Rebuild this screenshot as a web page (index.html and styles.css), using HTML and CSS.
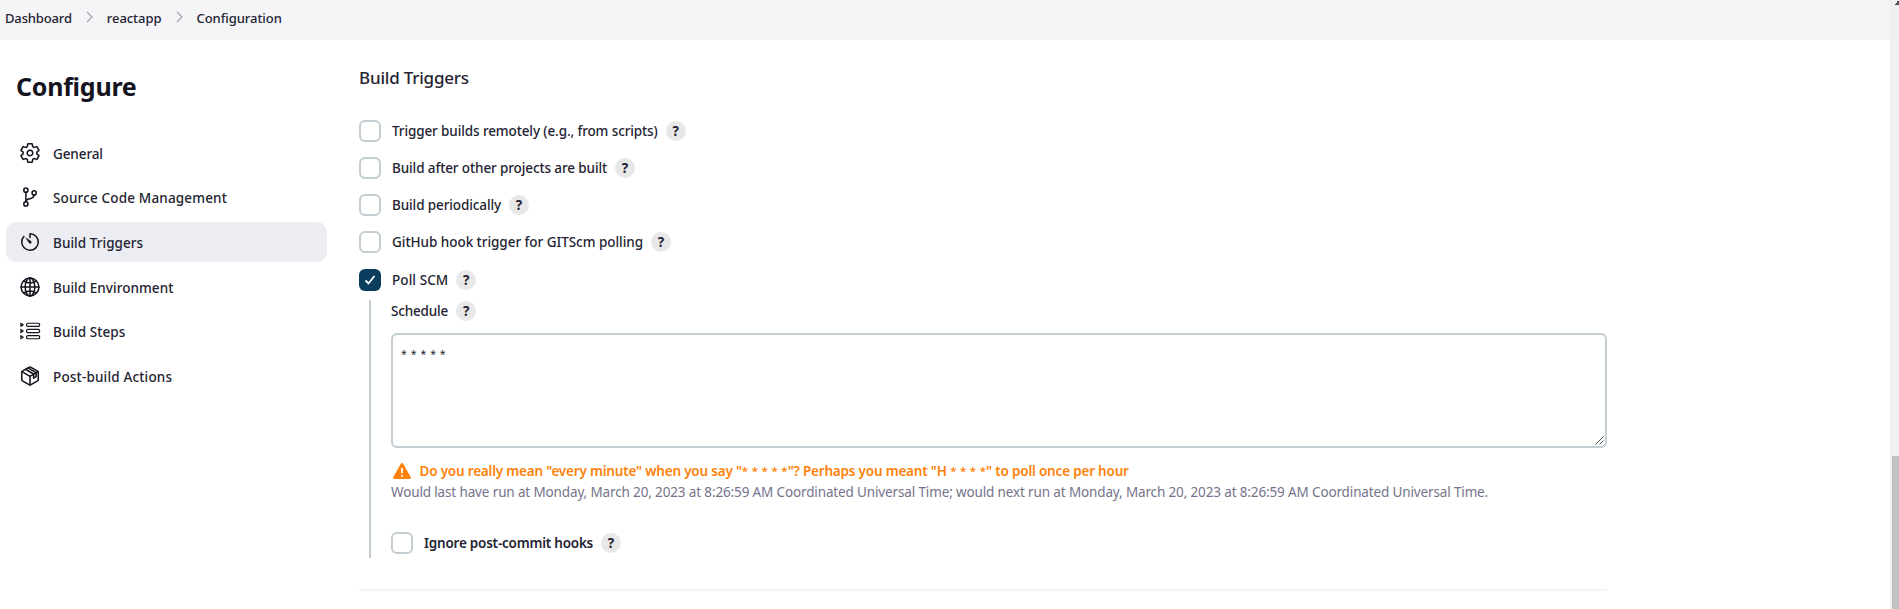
FILE: index.html
```
<!DOCTYPE html>
<html lang="en">
<head>
<meta charset="utf-8">
<title>Configuration - reactapp</title>
<link rel="stylesheet" href="styles.css">
</head>
<body>
<div class="page">
  <div class="content">
    <nav class="breadcrumbs">
      <a class="crumb crumb-tight">Dashboard</a>
      <svg class="chevron" viewBox="0 0 7 12"><path d="M1 1l5 5-5 5"/></svg>
      <a class="crumb">reactapp</a>
      <svg class="chevron" viewBox="0 0 7 12"><path d="M1 1l5 5-5 5"/></svg>
      <a class="crumb">Configuration</a>
    </nav>
    <div class="columns">
      <aside class="sidebar">
        <h1>Configure</h1>
        <ul class="tasks">
          <li class="task task-snug"><svg class="icon" viewBox="0 0 512 512"><path d="M262.29 192.31a64 64 0 1057.4 57.4 64.13 64.13 0 00-57.4-57.4zM416.39 256a154.34 154.34 0 01-1.53 20.79l45.21 35.46a10.81 10.81 0 012.45 13.75l-42.77 74a10.81 10.81 0 01-13.14 4.59l-44.9-18.08a16.11 16.11 0 00-15.17 1.75A164.48 164.48 0 01325 400.8a15.94 15.94 0 00-8.82 12.14l-6.73 47.89a11.08 11.08 0 01-10.68 9.17h-85.54a11.11 11.11 0 01-10.69-8.87l-6.72-47.82a16.07 16.07 0 00-9-12.22 155.3 155.3 0 01-21.46-12.57 16 16 0 00-15.11-1.71l-44.89 18.07a10.81 10.81 0 01-13.14-4.58l-42.77-74a10.8 10.8 0 012.45-13.75l38.21-30a16.05 16.05 0 006-14.08c-.36-4.17-.58-8.33-.58-12.5s.21-8.27.58-12.35a16 16 0 00-6.07-13.94l-38.19-30A10.81 10.81 0 0149.48 186l42.77-74a10.81 10.81 0 0113.14-4.59l44.9 18.08a16.11 16.11 0 0015.17-1.75A164.48 164.48 0 01187 111.2a15.94 15.94 0 008.82-12.14l6.73-47.89A11.08 11.08 0 01213.23 42h85.54a11.11 11.11 0 0110.69 8.87l6.72 47.82a16.07 16.07 0 009 12.22 155.3 155.3 0 0121.46 12.57 16 16 0 0015.11 1.71l44.89-18.07a10.81 10.81 0 0113.14 4.58l42.77 74a10.8 10.8 0 01-2.45 13.75l-38.21 30a16.05 16.05 0 00-6.05 14.08c.33 4.14.55 8.3.55 12.47z"/></svg><span>General</span></li>
          <li class="task task-wide"><svg class="icon" viewBox="0 0 512 512"><circle cx="160" cy="96" r="48"/><circle cx="160" cy="416" r="48"/><path d="M160 368V144"/><circle cx="352" cy="160" r="48"/><path d="M352 208c0 128-192 48-192 160"/></svg><span>Source Code Management</span></li>
          <li class="task active"><svg class="icon" viewBox="0 0 512 512"><path d="M112.91 128A191.85 191.85 0 0064 254c-1.18 106.35 85.65 193.8 192 194 106.2.2 192-85.83 192-192 0-104.54-83.55-189.61-187.5-192a4.36 4.36 0 00-4.5 4.37V152"/><path class="solid" d="M233.38 278.63l-79-113a8.13 8.13 0 0111.32-11.32l113 79a32.5 32.5 0 01-37.25 53.26 33.21 33.21 0 01-8.07-7.94z"/></svg><span>Build Triggers</span></li>
          <li class="task"><svg class="icon" viewBox="0 0 512 512"><path d="M256 48C141.13 48 48 141.13 48 256s93.13 208 208 208 208-93.13 208-208S370.87 48 256 48z"/><path d="M256 48c-58.07 0-112.67 93.13-112.67 208S197.93 464 256 464s112.67-93.13 112.67-208S314.07 48 256 48z"/><path d="M117.33 117.33c38.24 27.15 86.38 43.34 138.67 43.34s100.43-16.19 138.67-43.34M394.67 394.67c-38.24-27.15-86.38-43.34-138.67-43.34s-100.43 16.19-138.67 43.34M256 48v416M464 256H48"/></svg><span>Build Environment</span></li>
          <li class="task"><svg class="icon thin" viewBox="0 0 512 512"><rect x="176" y="76" width="304" height="72" rx="30"/><rect x="176" y="220" width="304" height="72" rx="30"/><rect x="176" y="364" width="304" height="72" rx="30"/><path d="M44 76v72l54-36zM44 220v72l54-36zM44 364v72l54-36z"/></svg><span>Build Steps</span></li>
          <li class="task task-loose"><svg class="icon" viewBox="0 0 512 512"><path d="M448 341.37V170.61A32 32 0 00432.11 143l-152-88.46a47.94 47.94 0 00-48.24 0L79.89 143A32 32 0 0064 170.61v170.76A32 32 0 0079.89 369l152 88.46a48 48 0 0048.24 0l152-88.46A32 32 0 00448 341.37z"/><path d="M69 153.99l187 110 187-110M256 463.99v-200M152 99l188 111v96l58-34v-94L212 66"/></svg><span>Post-build Actions</span></li>
        </ul>
      </aside>
      <main class="config">
        <h2>Build Triggers</h2>
        <div class="option opt-tight"><span class="box"></span><label>Trigger builds remotely (e.g., from scripts)</label><span class="help">?</span></div>
        <div class="option opt-tight"><span class="box"></span><label>Build after other projects are built</label><span class="help">?</span></div>
        <div class="option opt-tight"><span class="box"></span><label>Build periodically</label><span class="help">?</span></div>
        <div class="option"><span class="box"></span><label>GitHub hook trigger for GITScm polling</label><span class="help">?</span></div>
        <div class="option last"><span class="box checked"><svg viewBox="0 0 12 10"><path d="M1.5 5.5l3 3L10.5 1"/></svg></span><label>Poll SCM</label><span class="help">?</span></div>
        <section class="nested">
          <div class="field-label"><span>Schedule</span><span class="help">?</span></div>
          <div class="textarea">* * * * *<svg class="grip" viewBox="0 0 9 9"><path d="M.5 8.5l8-8M4.5 8.5l4-4"/></svg></div>
          <div class="warning"><svg viewBox="0 0 18 16"><path d="M7.8.8a1.4 1.4 0 012.4 0l7.5 13.1a1.4 1.4 0 01-1.2 2.1h-15a1.4 1.4 0 01-1.2-2.1z"/><path class="mark" d="M9 5v5.2M9 12v1.8"/></svg><span>Do you really mean "every minute" when you say "<span class="stars">* * * * *</span>"? Perhaps you meant "H <span class="stars">* * * *</span>" to poll once per hour</span></div>
          <div class="note">Would last have run at Monday, March 20, 2023 at 8:26:59 AM Coordinated Universal Time; would next run at Monday, March 20, 2023 at 8:26:59 AM Coordinated Universal Time.</div>
          <div class="option strong"><span class="box"></span><label>Ignore post-commit hooks</label><span class="help">?</span></div>
        </section>
      </main>
    </div>
  </div>
  <div class="scrollbar"><svg viewBox="0 0 5 5" shape-rendering="crispEdges"><path d="M0 5V4h1V3h1V2h1V1h2v4z"/></svg><div class="thumb"></div></div>
</div>
</body>
</html>
```
FILE: styles.css
```
* { box-sizing: border-box; }
body {
  margin: 0;
  background: #fff;
  color: #242331;
  font: 500 13.5px/20px "Noto Sans", "Open Sans", sans-serif;
  white-space: nowrap;
}
.page { display: flex; height: 609px; overflow: hidden; }
.content { flex: 1; min-width: 0; }

.breadcrumbs {
  display: flex;
  align-items: center;
  height: 40px;
  padding: 0 0 4px 5px;
  background: #f5f5f8;
  font-size: 13px;
  letter-spacing: -.05px;
}
.crumb-tight { letter-spacing: -.15px; }
.chevron {
  width: 7px;
  height: 12px;
  margin: 0 13.5px 2px 14.5px;
  fill: none;
  stroke: #a5a4b8;
  stroke-width: 1.3;
}

.columns { display: flex; }
.sidebar { width: 359px; padding: 28px 32px 0 6px; }
h1 {
  margin: 0 0 28.5px;
  padding-left: 10px;
  font-size: 25px;
  line-height: 36px;
  font-weight: 700;
  letter-spacing: -.25px;
  color: #14141f;
}
.tasks {
  display: grid;
  gap: 4.7px;
  width: 321px;
  margin: 0;
  padding: 0;
  list-style: none;
}
.task {
  display: flex;
  align-items: center;
  gap: 13px;
  height: 40px;
  padding: 0 14px;
  border-radius: 10px;
  letter-spacing: .05px;
}
.task > span { padding-top: 2px; }
.task-snug { letter-spacing: -.1px; }
.task-wide { letter-spacing: .16px; }
.task-loose { letter-spacing: .17px; }
.active { background: #ecedf3; }
.icon {
  width: 20px;
  height: 20px;
  fill: none;
  stroke: #14141f;
  stroke-width: 36;
  stroke-linecap: round;
  stroke-linejoin: round;
  overflow: visible;
  transform: scale(1.1);
}
.icon.thin { stroke-width: 28; }
.icon .solid { fill: #14141f; stroke: none; }

.config { width: 1248px; height: 551px; padding-top: 26px; border-bottom: 2px solid #f3f3f8; }
h2 {
  margin: 0 0 30px;
  font-size: 17px;
  line-height: 24px;
  font-weight: 500;
  letter-spacing: -.2px;
}
.option { display: flex; align-items: center; height: 22px; margin-bottom: 15px; letter-spacing: -.04px; }
.option.last { margin: 16px 0 9px; letter-spacing: .08px; }
.opt-tight { letter-spacing: -.11px; }
.option label { margin: 0 8px 0 11px; }
.box {
  display: grid;
  place-items: center;
  width: 22px;
  height: 22px;
  border: 2px solid #c3cdd2;
  border-radius: 6px;
}
.checked { border: 0; background: #0b3d5e; }
.checked svg { width: 12px; height: 10px; fill: none; stroke: #fff; stroke-width: 1.8; }
.help {
  width: 20px;
  height: 20px;
  border-radius: 50%;
  background: #e8e8e8;
  font-size: 13.5px;
  font-weight: 700;
  line-height: 20px;
  letter-spacing: 0;
  text-align: center;
}
.nested { height: 258px; margin-left: 10px; padding-left: 20px; border-left: 2px solid #c3cdd2; }
.field-label { display: flex; gap: 8px; padding-top: 1px; letter-spacing: -.17px; }
.textarea {
  position: relative;
  height: 115px;
  margin-top: 12px;
  padding: 9px 8px;
  border: 2px solid #c3cdd2;
  border-radius: 6px;
  font-size: 10.5px;
  font-weight: 400;
  word-spacing: 1.2px;
}
.grip { position: absolute; right: 1px; bottom: 1px; width: 9px; height: 9px; fill: none; stroke: #444; stroke-width: .9; }
.warning {
  display: flex;
  align-items: center;
  gap: 8.5px;
  height: 24px;
  margin-top: 11px;
  padding-left: 2px;
  color: #fe820a;
  font-weight: 600;
  letter-spacing: -.19px;
}
.warning svg { width: 18px; height: 16px; fill: #fe820a; }
.warning .mark { fill: none; stroke: #fff; stroke-width: 1.8; }
.stars { font-size: 11.5px; line-height: 1; letter-spacing: 0; word-spacing: .6px; vertical-align: 1px; }
.note { margin-top: -1px; color: #75738b; font-weight: 400; letter-spacing: -.138px; }
.strong { margin-top: 30px; font-weight: 600; letter-spacing: -.22px; }

.scrollbar { display: flex; flex-direction: column; align-items: flex-end; width: 9px; background: #f0f0f0; }
.scrollbar svg { width: 4px; height: 5px; fill: #505050; }
.thumb { width: 7px; height: 153px; margin-top: auto; background: #c1c1c1; }
```
